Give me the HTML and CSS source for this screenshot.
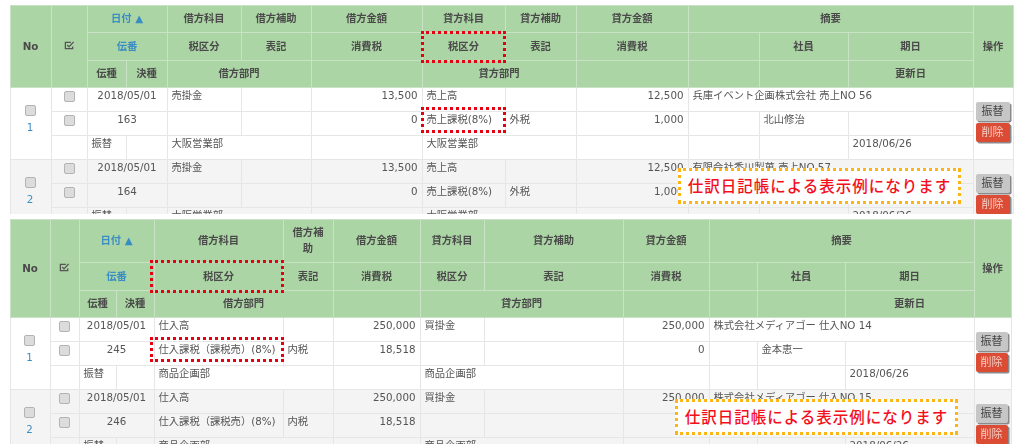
FILE: index.html
```html
<!DOCTYPE html>
<html lang="ja">
<head>
<meta charset="utf-8">
<title>仕訳日記帳</title>
<link rel="stylesheet" href="styles.css">
</head>
<body>
<section class="shot shot-a">
<table class="ledger ledger-a">
<colgroup><col><col><col><col><col><col><col><col><col><col><col><col><col><col></colgroup>
<thead>
<tr class="hr1"><th rowspan="3">No</th><th rowspan="3"><svg class="tick" viewBox="0 0 12 12"><path d="M9.5 7v2.5h-8v-7h6" fill="none" stroke="#555" stroke-width="1.4"/><path d="M3.5 5.5l2 2 5-5.5" fill="none" stroke="#555" stroke-width="1.4"/></svg></th><th colspan="2" class="lnk">日付 ▲</th><th>借方科目</th><th>借方補助</th><th>借方金額</th><th>貸方科目</th><th>貸方補助</th><th>貸方金額</th><th colspan="3">摘要</th><th rowspan="3">操作</th></tr>
<tr class="hr2"><th colspan="2" class="lnk">伝番</th><th>税区分</th><th>表記</th><th>消費税</th><th>税区分</th><th>表記</th><th>消費税</th><th></th><th>社員</th><th>期日</th></tr>
<tr class="hr3"><th>伝種</th><th>決種</th><th colspan="2">借方部門</th><th></th><th colspan="2">貸方部門</th><th></th><th></th><th></th><th>更新日</th></tr>
</thead>
<tbody>
<tr><td rowspan="3" class="no"><input type="checkbox"><a>1</a></td><td class="c"><input type="checkbox"></td><td colspan="2" class="c">2018/05/01</td><td>売掛金</td><td></td><td class="r">13,500</td><td>売上高</td><td></td><td class="r">12,500</td><td colspan="3">兵庫イベント企画株式会社 売上NO 56</td><td rowspan="3" class="ops"><button class="btn gray">振替</button><button class="btn red">削除</button></td></tr>
<tr><td class="c"><input type="checkbox"></td><td colspan="2" class="c">163</td><td></td><td></td><td class="r">0</td><td>売上課税(8%)</td><td>外税</td><td class="r">1,000</td><td></td><td>北山修治</td><td></td></tr>
<tr><td></td><td>振替</td><td></td><td colspan="2">大阪営業部</td><td></td><td colspan="2">大阪営業部</td><td></td><td></td><td></td><td>2018/06/26</td></tr>
<tr class="alt"><td rowspan="3" class="no"><input type="checkbox"><a>2</a></td><td class="c"><input type="checkbox"></td><td colspan="2" class="c">2018/05/01</td><td>売掛金</td><td></td><td class="r">13,500</td><td>売上高</td><td></td><td class="r">12,500</td><td colspan="3">有限会社香川製菓 売上NO 57</td><td rowspan="3" class="ops"><button class="btn gray">振替</button><button class="btn red">削除</button></td></tr>
<tr class="alt"><td class="c"><input type="checkbox"></td><td colspan="2" class="c">164</td><td></td><td></td><td class="r">0</td><td>売上課税(8%)</td><td>外税</td><td class="r">1,000</td><td></td><td></td><td></td></tr>
<tr class="alt"><td></td><td>振替</td><td></td><td colspan="2">大阪営業部</td><td></td><td colspan="2">大阪営業部</td><td></td><td></td><td></td><td>2018/06/26</td></tr>
</tbody>
</table>
<div class="mark mark-a1"></div>
<div class="mark mark-a2"></div>
<div class="callout callout-a">仕訳日記帳による表示例になります</div>
</section>
<section class="shot shot-b">
<table class="ledger ledger-b">
<colgroup><col><col><col><col><col><col><col><col><col><col><col><col><col><col></colgroup>
<thead>
<tr class="hr1"><th rowspan="3">No</th><th rowspan="3"><svg class="tick" viewBox="0 0 12 12"><path d="M9.5 7v2.5h-8v-7h6" fill="none" stroke="#555" stroke-width="1.4"/><path d="M3.5 5.5l2 2 5-5.5" fill="none" stroke="#555" stroke-width="1.4"/></svg></th><th colspan="2" class="lnk">日付 ▲</th><th>借方科目</th><th>借方補助</th><th>借方金額</th><th>貸方科目</th><th>貸方補助</th><th>貸方金額</th><th colspan="3">摘要</th><th rowspan="3">操作</th></tr>
<tr class="hr2"><th colspan="2" class="lnk">伝番</th><th>税区分</th><th>表記</th><th>消費税</th><th>税区分</th><th>表記</th><th>消費税</th><th></th><th>社員</th><th>期日</th></tr>
<tr class="hr3"><th>伝種</th><th>決種</th><th colspan="2">借方部門</th><th></th><th colspan="2">貸方部門</th><th></th><th></th><th></th><th>更新日</th></tr>
</thead>
<tbody>
<tr><td rowspan="3" class="no"><input type="checkbox"><a>1</a></td><td class="c"><input type="checkbox"></td><td colspan="2" class="c">2018/05/01</td><td>仕入高</td><td></td><td class="r">250,000</td><td>買掛金</td><td></td><td class="r">250,000</td><td colspan="3">株式会社メディアゴー 仕入NO 14</td><td rowspan="3" class="ops"><button class="btn gray">振替</button><button class="btn red">削除</button></td></tr>
<tr><td class="c"><input type="checkbox"></td><td colspan="2" class="c">245</td><td>仕入課税（課税売）(8%)</td><td>内税</td><td class="r">18,518</td><td></td><td></td><td class="r">0</td><td></td><td>金本恵一</td><td></td></tr>
<tr><td></td><td>振替</td><td></td><td colspan="2">商品企画部</td><td></td><td colspan="2">商品企画部</td><td></td><td></td><td></td><td>2018/06/26</td></tr>
<tr class="alt"><td rowspan="3" class="no"><input type="checkbox"><a>2</a></td><td class="c"><input type="checkbox"></td><td colspan="2" class="c">2018/05/01</td><td>仕入高</td><td></td><td class="r">250,000</td><td>買掛金</td><td></td><td class="r">250,000</td><td colspan="3">株式会社メディアゴー 仕入NO 15</td><td rowspan="3" class="ops"><button class="btn gray">振替</button><button class="btn red">削除</button></td></tr>
<tr class="alt"><td class="c"><input type="checkbox"></td><td colspan="2" class="c">246</td><td>仕入課税（課税売）(8%)</td><td>内税</td><td class="r">18,518</td><td></td><td></td><td class="r">0</td><td></td><td>金本恵一</td><td></td></tr>
<tr class="alt"><td></td><td>振替</td><td></td><td colspan="2">商品企画部</td><td></td><td colspan="2">商品企画部</td><td></td><td></td><td></td><td>2018/06/26</td></tr>
</tbody>
</table>
<div class="mark mark-b1"></div>
<div class="mark mark-b2"></div>
<div class="callout callout-b">仕訳日記帳による表示例になります</div>
</section>
</body>
</html>
```
FILE: styles.css
```css
* { box-sizing: border-box; }
html, body { margin: 0; padding: 0; background: #fff; }
body { width: 1024px; height: 444px; overflow: hidden; }

.shot { position: relative; overflow: hidden; margin-left: 10px; }
.shot-a { height: 214px; padding-top: 5px; margin-bottom: 5px; }
.shot-b { height: 225px; }

.ledger {
  border-collapse: collapse;
  table-layout: fixed;
  margin-left: -0.5px;
  font: 10.3px/14px "DejaVu Sans", "Noto Sans CJK JP", sans-serif;
  color: #555;
  filter: blur(0.45px);
}
.ledger-a { width: 1003px; }
.ledger-b { width: 1001px; }

.ledger-a col:nth-child(1) { width: 41px; }
.ledger-a col:nth-child(2) { width: 36px; }
.ledger-a col:nth-child(3) { width: 39px; }
.ledger-a col:nth-child(4) { width: 41px; }
.ledger-a col:nth-child(5) { width: 74px; }
.ledger-a col:nth-child(6) { width: 70px; }
.ledger-a col:nth-child(7) { width: 111px; }
.ledger-a col:nth-child(8) { width: 83px; }
.ledger-a col:nth-child(9) { width: 71px; }
.ledger-a col:nth-child(10) { width: 112px; }
.ledger-a col:nth-child(11) { width: 71px; }
.ledger-a col:nth-child(12) { width: 89px; }
.ledger-a col:nth-child(13) { width: 125px; }
.ledger-a col:nth-child(14) { width: 40px; }

.ledger-b col:nth-child(1) { width: 40px; }
.ledger-b col:nth-child(2) { width: 29px; }
.ledger-b col:nth-child(3) { width: 37px; }
.ledger-b col:nth-child(4) { width: 38px; }
.ledger-b col:nth-child(5) { width: 129px; }
.ledger-b col:nth-child(6) { width: 50px; }
.ledger-b col:nth-child(7) { width: 87px; }
.ledger-b col:nth-child(8) { width: 64px; }
.ledger-b col:nth-child(9) { width: 139px; }
.ledger-b col:nth-child(10) { width: 86px; }
.ledger-b col:nth-child(11) { width: 48px; }
.ledger-b col:nth-child(12) { width: 88px; }
.ledger-b col:nth-child(13) { width: 129px; }
.ledger-b col:nth-child(14) { width: 37px; }

th, td { border: 1px solid #e6e6e6; padding: 0 4px; overflow: hidden; }
thead th {
  background: #acd5a5;
  border-color: #c9e1c4;
  color: #4a4a4a;
  font-weight: bold;
  text-align: center;
  vertical-align: middle;
  line-height: 16px;
  padding-bottom: 2px;
}
thead .lnk { color: #3a8cc4; }
.ledger-a .hr1 th { height: 27px; }
.ledger-a .hr2 th { height: 28px; }
.ledger-a .hr3 th { height: 27px; }
.ledger-b .hr1 th { height: 43px; }
.ledger-b .hr2 th { height: 28px; }
.ledger-b .hr3 th { height: 27px; }

.tick { width: 11px; height: 11px; display: block; margin: 0 auto; }

tbody td { height: 24px; vertical-align: top; padding-top: 0; white-space: nowrap; background: #fff; }
tbody .alt td { background: #f4f4f4; }
td.r { text-align: right; }
td.c { text-align: center; }
td.c input { margin-top: 3px; }
td.no { text-align: center; padding-top: 15px; padding-right: 5px; color: #3a8cc4; }
td.no a { display: block; margin-top: 4px; }

input[type="checkbox"] {
  appearance: none;
  display: block;
  width: 11px;
  height: 11px;
  margin: 2px auto 0;
  background: #dcdcdc;
  border: 1px solid #b3b3b3;
  border-radius: 2px;
}

td.ops { vertical-align: middle; padding: 0 0 2px 2px; }
.ledger-b td.ops { padding-left: 1px; }
.ledger-b .btn { width: 32px; }
.btn {
  display: block;
  width: 34px;
  height: 19px;
  padding: 0;
  margin: 0 0 2px;
  border: 0;
  border-radius: 2px;
  font: 11px/19px "DejaVu Sans", "Noto Sans CJK JP", sans-serif;
  box-shadow: 1.5px 1.5px 0 #8a8a8a;
}
.gray { background: #c6c6c6; color: #474747; }
.red { background: #dc4b33; color: #f3cdc6; }

.mark { position: absolute; border: 3px dotted #e60012; }
.mark-a1 { left: 411px; top: 31px; width: 85px; height: 32px; }
.mark-a2 { left: 411px; top: 107px; width: 85px; height: 26px; }
.mark-b1 { left: 140px; top: 41px; width: 134px; height: 33px; }
.mark-b2 { left: 140px; top: 118px; width: 134px; height: 25px; }

.callout {
  position: absolute;
  display: flex;
  align-items: center;
  justify-content: center;
  width: 283px;
  height: 36px;
  background: #fff;
  border: 3px dotted #fdb515;
  color: #f40f1d;
  font: 500 15.5px/1 "Noto Sans CJK JP", sans-serif;
  letter-spacing: 1px;
  white-space: nowrap;
}
.callout-a { left: 668px; top: 168px; }
.callout-b { left: 665px; top: 180px; }
```
